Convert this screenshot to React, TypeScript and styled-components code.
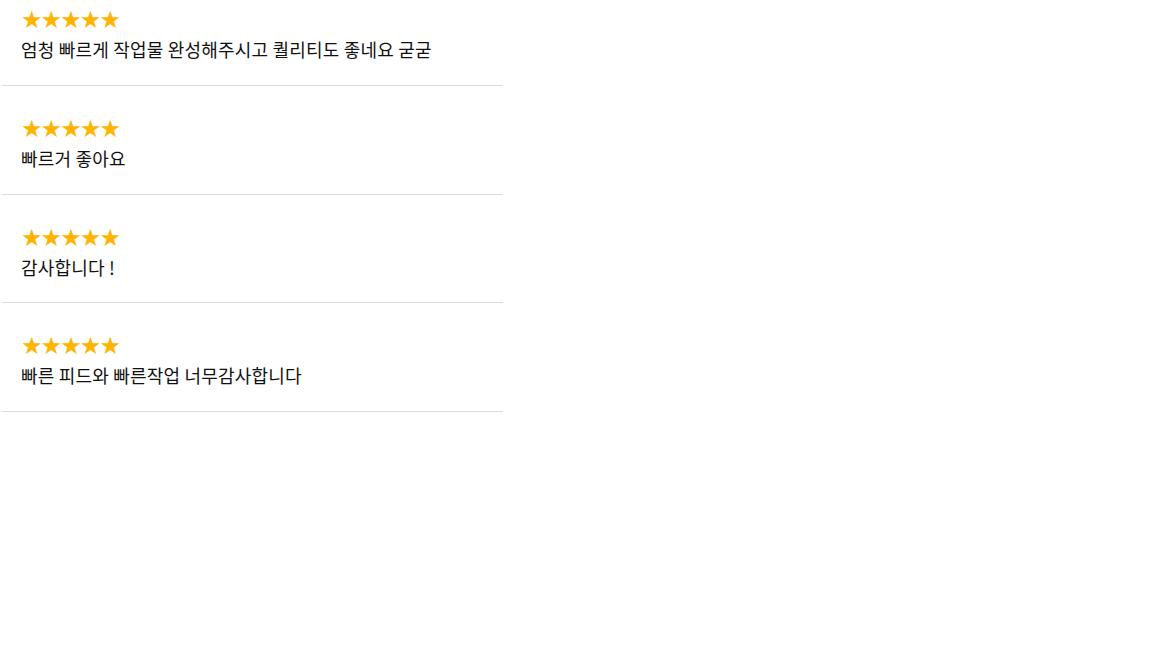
import styled, { createGlobalStyle } from "styled-components";

const GlobalStyle = createGlobalStyle`
  html, body {
    margin: 0;
    padding: 0;
    background: #fff;
  }
  body {
    font-family: "Noto Sans CJK KR", "Noto Sans", sans-serif;
    color: #111;
  }
`;

const ReviewList = styled.ul`
  list-style: none;
  margin: 0 0 0 2px;
  padding: 0;
  width: 501px;
`;

const ReviewItem = styled.li`
  padding: 32px 0 22.8px 19px;
  border-bottom: 1px solid #dcdcdc;

  &:first-child {
    padding-top: 9px;
  }
`;

const Stars = styled.div`
  display: flex;
  height: 20px;
  line-height: 22px;
  font-size: 24px;
  color: #ffb400;
`;

const Star = styled.span`
  display: inline-block;
  width: 19.6px;
  height: 20px;
  text-align: center;
  font-family: "DejaVu Sans", sans-serif;
`;

const Comment = styled.p`
  margin: 7px 0 0;
  font-size: 18px;
  line-height: 26px;
  letter-spacing: 0.2px;
  color: #111;
`;

const reviews = [
  { rating: 5, text: "엄청 빠르게 작업물 완성해주시고 퀄리티도 좋네요 굳굳" },
  { rating: 5, text: "빠르거 좋아요" },
  { rating: 5, text: "감사합니다 !" },
  { rating: 5, text: "빠른 피드와 빠른작업 너무감사합니다" },
];

export default function App() {
  return (
    <>
      <GlobalStyle />
      <ReviewList>
        {reviews.map((r, i) => (
          <ReviewItem key={i}>
            <Stars>
              {Array.from({ length: r.rating }).map((_, j) => (
                <Star key={j}>★</Star>
              ))}
            </Stars>
            <Comment>{r.text}</Comment>
          </ReviewItem>
        ))}
      </ReviewList>
    </>
  );
}
